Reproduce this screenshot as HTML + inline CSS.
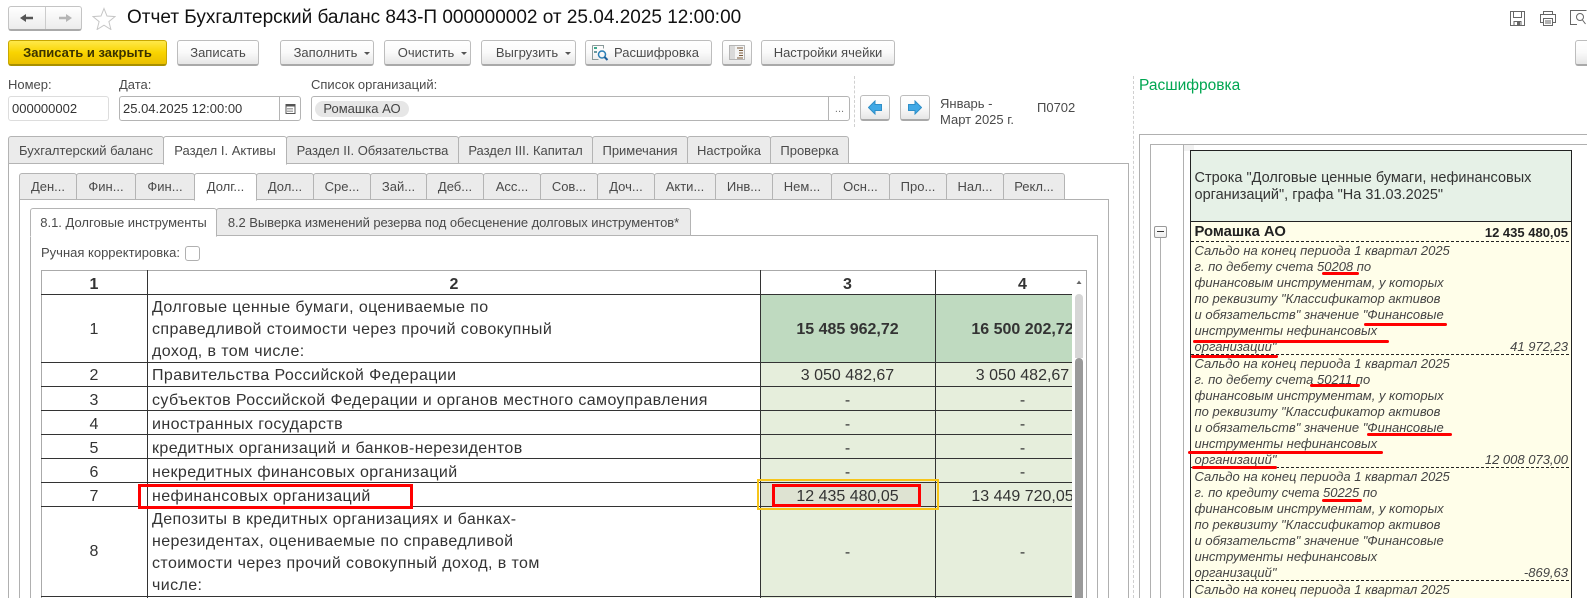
<!DOCTYPE html>
<html lang="ru"><head><meta charset="utf-8"><title>Отчет</title>
<style>
html,body{margin:0;padding:0;background:#fff}
#p{position:relative;width:1587px;height:598px;overflow:hidden;background:#fff;font:13px "Liberation Sans",sans-serif;color:#4a4a4a}
#p div,#p span.a{position:absolute;box-sizing:border-box;white-space:nowrap}
.btn{top:40px;height:26px;border:1px solid #bdbdbd;border-bottom:2px solid #a9a9a9;border-radius:3px;background:linear-gradient(#fff,#fafafa 50%,#e6e6e6);text-align:center;line-height:24px;color:#4a4a4a}
.caret{display:inline-block;width:0;height:0;border:3px solid transparent;border-top:3px solid #555;border-bottom:0;margin-left:7px;vertical-align:2px}
.lb{height:16px;line-height:16px}
.inp{top:96px;height:25px;border:1px solid #b4b4b4;border-radius:3px;background:#fff;line-height:23px;color:#333;padding-left:3px}
.t1,.t2,.t3{background:#ebebeb;border:1px solid #b4b4b4;border-radius:3px 3px 0 0;text-align:center;color:#4a4a4a}
.t1{top:136px;height:28px;line-height:27px}
.t2{top:173px;height:27px;line-height:25px}
.t3{top:208px;height:28px;line-height:27px}
.on{background:#fff;border-bottom-color:#fff}
.ln{background:#b0b0b0}
.h{background:#333}
.c{font-size:16px;color:#333;height:22px;line-height:22px;letter-spacing:.4px}
.m{text-align:center;letter-spacing:0}
.g{background:#e6eedc}
.i{left:1194.5px;height:16px;line-height:16px;font-style:italic;font-size:13px;color:#444}
.r{right:19px;text-align:right;height:16px;line-height:16px;font-style:italic;font-size:13px;color:#444}
.u{background:#f00;height:3px;border-radius:1.5px}
.d{left:1191px;width:380px;height:1px;background:repeating-linear-gradient(90deg,#222 0 3px,transparent 3px 5px)}
</style></head><body><div id="p">

<!-- top nav -->
<div style="left:8px;top:6px;width:74px;height:25px;border:1px solid #c4c4c4;border-bottom:2px solid #aaa;border-radius:3px;background:linear-gradient(#fff,#ececec)"></div>
<div style="left:45px;top:7px;width:1px;height:22px;background:#ccc"></div>
<svg style="position:absolute;left:18px;top:12px" width="56" height="12"><path d="M2 6l6-4v2.700h7v2.600h-7V10z" fill="#555"/><path d="M54 6l-6-4v2.700h-7v2.600h7V10z" fill="#b5b5b5"/></svg>
<svg style="position:absolute;left:92px;top:7px" width="24" height="23"><path d="M12 1.500l3 7.500 8 .6-6.100 5 2 7.900L12 18.200l-6.900 4.300 2-7.900-6.100-5 8-.6z" fill="#fff" stroke="#c6c6c6"/></svg>
<div style="left:127px;top:6px;height:24px;line-height:24px;font-size:19px;color:#111" id="title">Отчет Бухгалтерский баланс 843-П 000000002 от 25.04.2025 12:00:00</div>

<!-- top right icons -->
<svg style="position:absolute;left:1509px;top:10px" width="18" height="17" fill="none" stroke="#666"><path d="M1.500 1.500h14v14h-14z"/><path d="M4.500 1.500v6h8v-6M5 15.500v-4h7v4"/><rect x="8" y="12" width="3" height="3" fill="#666" stroke="none"/></svg>
<svg style="position:absolute;left:1539px;top:10px" width="18" height="17" fill="none" stroke="#666"><path d="M4.500 4.500v-3h9v3M4.500 12.500h-3v-8h15v8h-3"/><path d="M4.500 8.500h9v7h-9zM6 11h6M6 13h6"/></svg>
<svg style="position:absolute;left:1569px;top:9px" width="18" height="18" fill="none" stroke="#666"><path d="M8 15.500H1.500v-14h16"/><circle cx="11" cy="8" r="3.500"/><path d="M13.500 11l3 4"/></svg>
<div class="btn" style="left:1575px;width:20px"></div>

<!-- command bar -->
<div class="btn" style="left:8px;width:159px;background:linear-gradient(#ffe94a,#f9d400 50%,#eabf00);border-color:#c9a800;border-bottom-color:#a89000;color:#3a3200;font-weight:bold;font-size:13px">Записать и закрыть</div>
<div class="btn" style="left:177px;width:82px">Записать</div>
<div class="btn" style="left:280px;width:94px;padding-left:10px">Заполнить<span class="caret"></span></div>
<div class="btn" style="left:384px;width:87px;padding-left:10px">Очистить<span class="caret"></span></div>
<div class="btn" style="left:481px;width:95px;padding-left:10px">Выгрузить<span class="caret"></span></div>
<div class="btn" style="left:585px;width:127px;padding-left:16px">Расшифровка</div>
<svg style="position:absolute;left:591px;top:44px" width="18" height="18" fill="none"><path d="M1.500 1.500h11v3M1.500 1.500v14h6" stroke="#8a9a9a"/><rect x="3" y="3" width="3" height="2" fill="#3ea88c"/><rect x="3" y="7" width="3" height="2" fill="#6a9aa0"/><circle cx="11" cy="10.500" r="3.500" stroke="#2a7fb5" stroke-width="1.500"/><path d="M13.500 13l3 3" stroke="#1f5f9a" stroke-width="2"/></svg>
<div class="btn" style="left:722px;width:30px"></div>
<svg style="position:absolute;left:729px;top:45px" width="16" height="15"><rect x=".5" y=".5" width="15" height="14" fill="#f4f4f4" stroke="#b5b5b5"/><rect x="1" y="1" width="5" height="13" fill="#d9d9d9"/><path d="M8 3h6M10 5.500h4M10 8h4M10 10.500h4M8 13h6" stroke="#7a5a3a"/></svg>
<div class="btn" style="left:761px;width:134px">Настройки ячейки</div>

<!-- form fields -->
<div class="lb" style="left:8px;top:77px">Номер:</div>
<div class="lb" style="left:119px;top:77px">Дата:</div>
<div class="lb" style="left:311px;top:77px">Список организаций:</div>
<div class="inp" style="left:8px;width:101px;border-color:#ddd">000000002</div>
<div class="inp" style="left:119px;width:182px">25.04.2025 12:00:00</div>
<div style="left:279px;top:96px;width:1px;height:25px;background:#b4b4b4"></div>
<svg style="position:absolute;left:285px;top:103px" width="11" height="11"><rect x="1" y="1.500" width="9" height="9" fill="#fff" stroke="#555"/><rect x="1" y="1" width="9" height="2.500" fill="#555"/><path d="M2.500 5.500h6M2.500 7h6M2.500 8.500h6" stroke="#555" stroke-dasharray="1 1"/></svg>
<div class="inp" style="left:311px;width:539px"></div>
<div style="left:315px;top:101px;width:94px;height:16px;border-radius:8px;background:#e6e6e6;line-height:16px;text-align:center;color:#444">Ромашка АО</div>
<div style="left:828px;top:96px;width:1px;height:25px;background:#b4b4b4"></div>
<div style="left:829px;top:100px;width:21px;height:18px;line-height:18px;text-align:center;font-size:11px;color:#777">...</div>
<div style="left:854px;top:76px;width:0;height:51px;border-left:1px dashed #d0d0d0"></div>
<div class="btn" style="left:860px;top:95px;width:30px"></div>
<div class="btn" style="left:900px;top:95px;width:30px"></div>
<svg style="position:absolute;left:868px;top:100px" width="14" height="15"><path d="M.5 7.500L7 1v3.500h6.500v6H7V14z" fill="#41a9e6" stroke="#2f8fc8"/></svg>
<svg style="position:absolute;left:908px;top:100px" width="14" height="15"><path d="M13.500 7.500L7 1v3.500H.5v6H7V14z" fill="#41a9e6" stroke="#2f8fc8"/></svg>
<div class="lb" style="left:940px;top:96px">Январь -</div>
<div class="lb" style="left:940px;top:112px">Март 2025 г.</div>
<div class="lb" style="left:1037px;top:100px">П0702</div>

<!-- panel frames -->
<div style="left:8px;top:163px;width:1121px;height:440px;border:1px solid #b0b0b0"></div>
<div style="left:19px;top:199px;width:1090px;height:404px;border:1px solid #b0b0b0"></div>
<div style="left:30px;top:235px;width:1068px;height:368px;border:1px solid #b0b0b0"></div>

<!-- tabs 1 -->
<div class="t1" style="left:8px;width:156px">Бухгалтерский баланс</div>
<div class="t1 on" style="left:163px;width:124px;height:29px">Раздел I. Активы</div>
<div class="t1" style="left:286px;width:173px">Раздел II. Обязательства</div>
<div class="t1" style="left:458px;width:135px">Раздел III. Капитал</div>
<div class="t1" style="left:592px;width:96px">Примечания</div>
<div class="t1" style="left:687px;width:84px">Настройка</div>
<div class="t1" style="left:770px;width:79px">Проверка</div>

<!-- tabs 2 -->
<div class="t2" style="left:19px;width:58px">Ден...</div>
<div class="t2" style="left:76px;width:60px">Фин...</div>
<div class="t2" style="left:135px;width:60px">Фин...</div>
<div class="t2 on" style="left:194px;width:63px;height:28px">Долг...</div>
<div class="t2" style="left:256px;width:58px">Дол...</div>
<div class="t2" style="left:313px;width:58px">Сре...</div>
<div class="t2" style="left:370px;width:57px">Зай...</div>
<div class="t2" style="left:426px;width:58px">Деб...</div>
<div class="t2" style="left:483px;width:58px">Асс...</div>
<div class="t2" style="left:540px;width:58px">Сов...</div>
<div class="t2" style="left:597px;width:58px">Доч...</div>
<div class="t2" style="left:654px;width:62px">Акти...</div>
<div class="t2" style="left:715px;width:58px">Инв...</div>
<div class="t2" style="left:772px;width:60px">Нем...</div>
<div class="t2" style="left:831px;width:59px">Осн...</div>
<div class="t2" style="left:889px;width:58px">Про...</div>
<div class="t2" style="left:946px;width:58px">Нал...</div>
<div class="t2" style="left:1003px;width:62px">Рекл...</div>

<!-- tabs 3 -->
<div class="t3 on" style="left:30px;width:187px;height:29px">8.1. Долговые инструменты</div>
<div class="t3" style="left:216px;width:475px;letter-spacing:-.06px">8.2 Выверка изменений резерва под обесценение долговых инструментов*</div>

<div class="lb" style="left:41px;top:245px">Ручная корректировка:</div>
<div style="left:185px;top:246px;width:15px;height:15px;border:1px solid #b0b0b0;border-radius:3px;background:#fff"></div>

<!-- table -->
<div style="left:41px;top:270px;width:1046px;height:1px;background:#aaa"></div>
<div style="left:41px;top:270px;width:1px;height:328px;background:#aaa"></div>
<div style="left:1086px;top:270px;width:1px;height:328px;background:#aaa"></div>

<div style="left:760px;top:294px;width:175px;height:68px;background:#bfdac0"></div>
<div style="left:935px;top:294px;width:137px;height:68px;background:#bfdac0"></div>
<div class="g" style="left:760px;top:362px;width:312px;height:236px"></div>
<div style="left:760px;top:482px;width:175px;height:24px;background:#dee3d2"></div>

<div class="h" style="left:147px;top:270px;width:1px;height:328px"></div>
<div class="h" style="left:760px;top:270px;width:1px;height:328px"></div>
<div class="h" style="left:935px;top:270px;width:1px;height:328px"></div>
<div class="h" style="left:41px;top:294px;width:1031px;height:1px"></div>
<div class="h" style="left:41px;top:362px;width:1031px;height:1px"></div>
<div class="h" style="left:41px;top:386px;width:1031px;height:1px"></div>
<div class="h" style="left:41px;top:410px;width:1031px;height:1px"></div>
<div class="h" style="left:41px;top:434px;width:1031px;height:1px"></div>
<div class="h" style="left:41px;top:458px;width:1031px;height:1px"></div>
<div class="h" style="left:41px;top:482px;width:1031px;height:1px"></div>
<div class="h" style="left:41px;top:506px;width:1031px;height:1px"></div>
<div class="h" style="left:41px;top:596px;width:1031px;height:1px"></div>

<!-- header -->
<div class="c m" style="left:41px;width:106px;top:274px;font-weight:bold">1</div>
<div class="c m" style="left:148px;width:612px;top:274px;font-weight:bold">2</div>
<div class="c m" style="left:760px;width:175px;top:274px;font-weight:bold">3</div>
<div class="c m" style="left:935px;width:175px;top:274px;font-weight:bold">4</div>
<!-- col1 -->
<div class="c m" style="left:41px;width:106px;top:319px">1</div>
<div class="c m" style="left:41px;width:106px;top:365px">2</div>
<div class="c m" style="left:41px;width:106px;top:390px">3</div>
<div class="c m" style="left:41px;width:106px;top:414px">4</div>
<div class="c m" style="left:41px;width:106px;top:438px">5</div>
<div class="c m" style="left:41px;width:106px;top:462px">6</div>
<div class="c m" style="left:41px;width:106px;top:486px">7</div>
<div class="c m" style="left:41px;width:106px;top:541px">8</div>
<!-- col2 -->
<div class="c" style="left:152px;top:297px">Долговые ценные бумаги, оцениваемые по</div>
<div class="c" style="left:152px;top:319px">справедливой стоимости через прочий совокупный</div>
<div class="c" style="left:152px;top:341px">доход, в том числе:</div>
<div class="c" style="left:152px;top:365px">Правительства Российской Федерации</div>
<div class="c" style="left:152px;top:390px">субъектов Российской Федерации и органов местного самоуправления</div>
<div class="c" style="left:152px;top:414px">иностранных государств</div>
<div class="c" style="left:152px;top:438px">кредитных организаций и банков-нерезидентов</div>
<div class="c" style="left:152px;top:462px">некредитных финансовых организаций</div>
<div class="c" style="left:152px;top:486px">нефинансовых организаций</div>
<div class="c" style="left:152px;top:509px">Депозиты в кредитных организациях и банках-</div>
<div class="c" style="left:152px;top:531px">нерезидентах, оцениваемые по справедливой</div>
<div class="c" style="left:152px;top:553px">стоимости через прочий совокупный доход, в том</div>
<div class="c" style="left:152px;top:575px">числе:</div>
<!-- col3 -->
<div class="c m" style="left:760px;width:175px;top:319px;font-weight:bold">15 485 962,72</div>
<div class="c m" style="left:760px;width:175px;top:365px">3 050 482,67</div>
<div class="c m" style="left:760px;width:175px;top:390px">-</div>
<div class="c m" style="left:760px;width:175px;top:414px">-</div>
<div class="c m" style="left:760px;width:175px;top:438px">-</div>
<div class="c m" style="left:760px;width:175px;top:462px">-</div>
<div class="c m" style="left:760px;width:175px;top:486px">12 435 480,05</div>
<div class="c m" style="left:760px;width:175px;top:542px">-</div>
<!-- col4 clipped -->
<div style="left:936px;top:294px;width:136px;height:304px;overflow:hidden">
<div class="c m" style="left:-1px;width:175px;top:25px;font-weight:bold">16 500 202,72</div>
<div class="c m" style="left:-1px;width:175px;top:71px">3 050 482,67</div>
<div class="c m" style="left:-1px;width:175px;top:96px">-</div>
<div class="c m" style="left:-1px;width:175px;top:120px">-</div>
<div class="c m" style="left:-1px;width:175px;top:144px">-</div>
<div class="c m" style="left:-1px;width:175px;top:168px">-</div>
<div class="c m" style="left:-1px;width:175px;top:192px">13 449 720,05</div>
<div class="c m" style="left:-1px;width:175px;top:248px">-</div>
</div>
<!-- scrollbar -->
<svg style="position:absolute;left:1075px;top:279px" width="8" height="6"><path d="M1.500 5L4 1.500 6.500 5z" fill="#666"/></svg>
<div style="left:1075px;top:294px;width:8px;height:64px;background:#d6d6d6;border-radius:4px 4px 0 0"></div>
<div style="left:1075px;top:358px;width:8px;height:240px;background:#9a9a9a;border-radius:4px 4px 0 0"></div>

<!-- highlight boxes -->
<div style="left:757px;top:479px;width:182px;height:31px;border:2px solid #f7c519"></div>
<div style="left:772px;top:484px;width:149px;height:23px;border:3px solid #f00"></div>
<div style="left:138px;top:484px;width:275px;height:25px;border:3px solid #f00"></div>

<!-- right panel -->
<div style="left:1133px;top:76px;width:0;height:522px;border-left:1px dashed #d0d0d0"></div>
<div style="left:1139px;top:75px;height:21px;line-height:21px;font-size:15.500px;color:#00a651">Расшифровка</div>
<div style="left:1139px;top:134px;width:460px;height:480px;border:1px solid #b0b0b0"></div>
<div style="left:1150px;top:144px;width:450px;height:470px;border:1px solid #b0b0b0"></div>
<div class="ln" style="left:1183px;top:145px;width:1px;height:453px"></div>
<div style="left:1184px;top:145px;width:10px;height:6px;background:#f2f2f2"></div>
<div style="left:1154px;top:226px;width:13px;height:12px;border:1px solid #999;border-radius:2px;background:linear-gradient(#fff,#eee)"></div>
<div style="left:1157px;top:231px;width:7px;height:1px;background:#333"></div>
<div class="ln" style="left:1160px;top:238px;width:1px;height:360px"></div>

<div style="left:1190px;top:150px;width:382px;height:72px;background:#e6f1e7;border:1px solid #222"></div>
<div style="left:1190px;top:221px;width:382px;height:380px;background:#fffee9;border:1px solid #222"></div>
<div style="left:1194.500px;top:169px;height:18px;line-height:18px;font-size:14.500px;color:#333">Строка "Долговые ценные бумаги, нефинансовых</div>
<div style="left:1194.500px;top:186px;height:18px;line-height:18px;font-size:14.500px;color:#333">организаций", графа "На 31.03.2025"</div>
<div style="left:1194.500px;top:223px;height:18px;line-height:18px;font-size:14.800px;font-weight:bold;color:#222">Ромашка АО</div>
<div style="right:19px;top:224px;height:18px;line-height:18px;font-size:13px;font-weight:bold;color:#222">12 435 480,05</div>

<div class="d" style="top:241px"></div>
<div class="i" style="top:243px">Сальдо на конец периода 1 квартал 2025</div>
<div class="i" style="top:259px">г. по дебету счета 50208 по</div>
<div class="i" style="top:275px">финансовым инструментам, у которых</div>
<div class="i" style="top:291px">по реквизиту "Классификатор активов</div>
<div class="i" style="top:307px">и обязательств" значение "Финансовые</div>
<div class="i" style="top:323px">инструменты нефинансовых</div>
<div class="i" style="top:339px">организаций"</div>
<div class="r" style="top:339px">41 972,23</div>

<div class="d" style="top:354px"></div>
<div class="i" style="top:356px">Сальдо на конец периода 1 квартал 2025</div>
<div class="i" style="top:372px">г. по дебету счета 50211 по</div>
<div class="i" style="top:388px">финансовым инструментам, у которых</div>
<div class="i" style="top:404px">по реквизиту "Классификатор активов</div>
<div class="i" style="top:420px">и обязательств" значение "Финансовые</div>
<div class="i" style="top:436px">инструменты нефинансовых</div>
<div class="i" style="top:452px">организаций"</div>
<div class="r" style="top:452px">12 008 073,00</div>

<div class="d" style="top:467px"></div>
<div class="i" style="top:469px">Сальдо на конец периода 1 квартал 2025</div>
<div class="i" style="top:485px">г. по кредиту счета 50225 по</div>
<div class="i" style="top:501px">финансовым инструментам, у которых</div>
<div class="i" style="top:517px">по реквизиту "Классификатор активов</div>
<div class="i" style="top:533px">и обязательств" значение "Финансовые</div>
<div class="i" style="top:549px">инструменты нефинансовых</div>
<div class="i" style="top:565px">организаций"</div>
<div class="r" style="top:565px">-869,63</div>

<div class="d" style="top:580px"></div>
<div class="i" style="top:582px">Сальдо на конец периода 1 квартал 2025</div>

<!-- red underlines -->
<div class="u" style="left:1322px;top:272px;width:37px"></div>
<div class="u" style="left:1364px;top:323px;width:83px"></div>
<div class="u" style="left:1193px;top:340px;width:196px"></div>
<div class="u" style="left:1191px;top:355px;width:87px"></div>
<div class="u" style="left:1310px;top:384px;width:50px"></div>
<div class="u" style="left:1367px;top:433px;width:85px"></div>
<div class="u" style="left:1188px;top:451px;width:195px"></div>
<div class="u" style="left:1192px;top:466px;width:85px"></div>
<div class="u" style="left:1322px;top:499px;width:40px"></div>

</div></body></html>
